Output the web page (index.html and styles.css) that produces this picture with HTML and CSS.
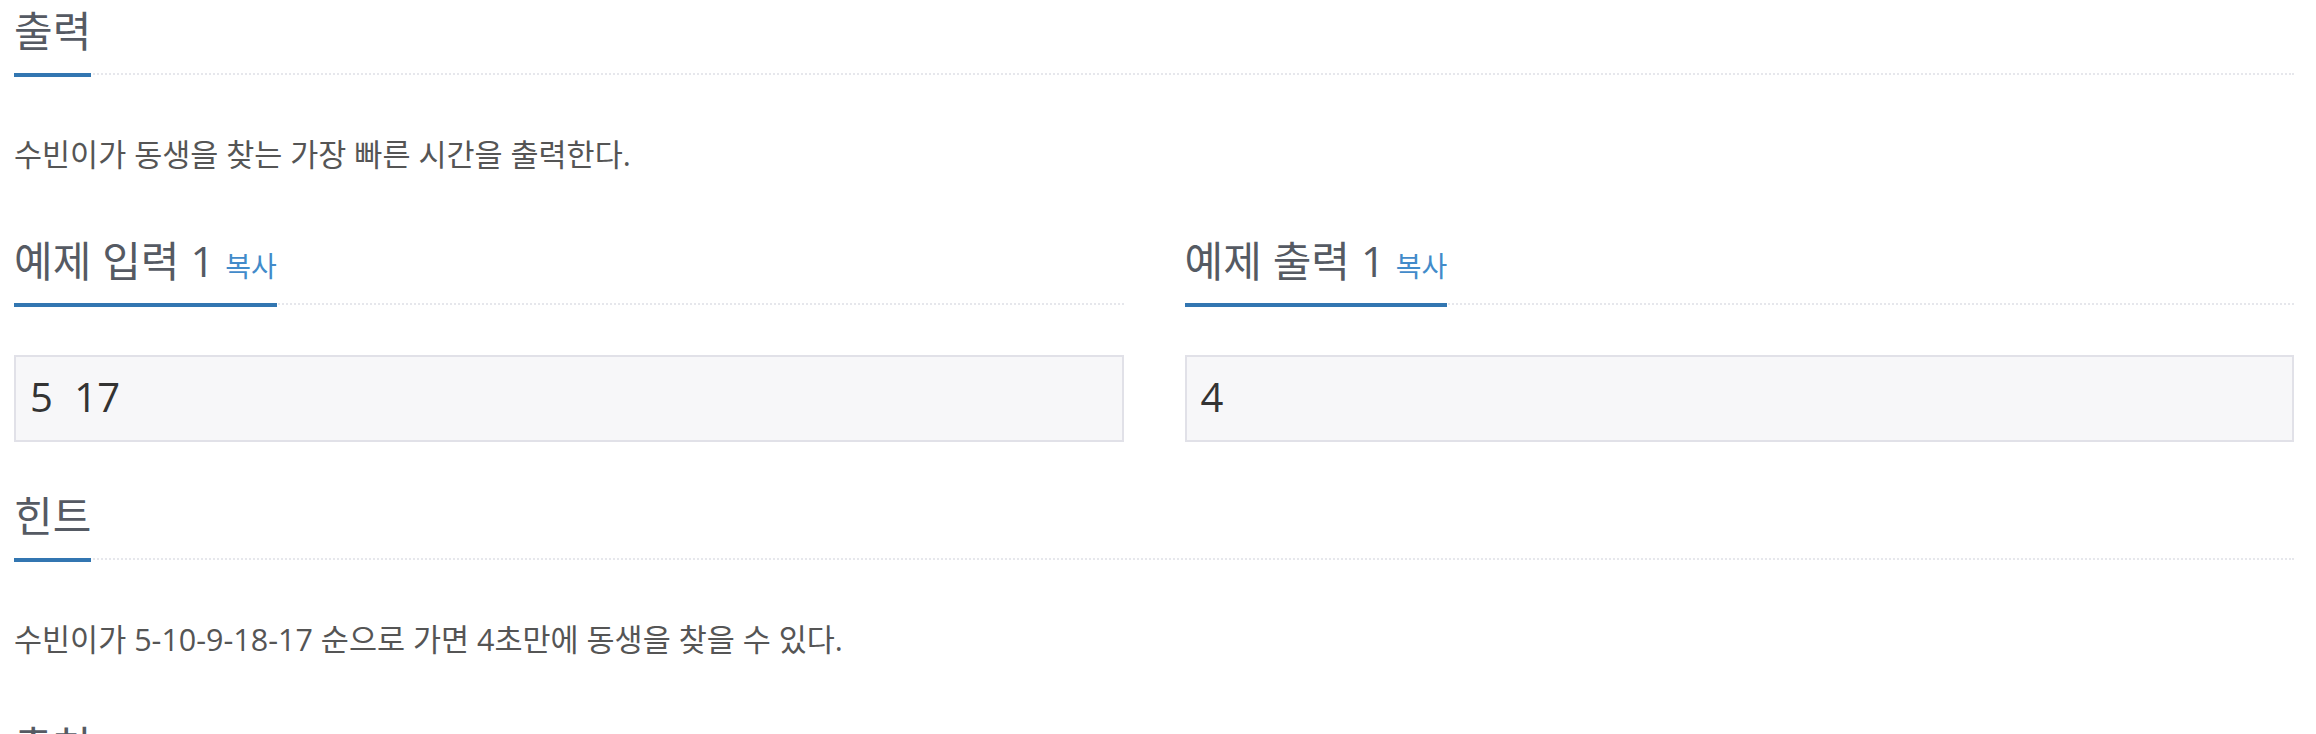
FILE: index.html
```html
<!DOCTYPE html>
<html lang="ko">
<head>
<meta charset="utf-8">
<title>문제</title>
<link rel="stylesheet" href="styles.css">
</head>
<body>
<div class="page">
  <section class="sec">
    <div class="headline"><h2>출력</h2></div>
    <p class="text">수빈이가 동생을 찾는 가장 빠른 시간을 출력한다.</p>
  </section>

  <div class="samples">
    <section class="sample">
      <div class="headline"><h2>예제 입력 1 <a class="copy" href="#">복사</a></h2></div>
      <pre class="sampledata">5 17</pre>
    </section>
    <section class="sample">
      <div class="headline"><h2>예제 출력 1 <a class="copy" href="#">복사</a></h2></div>
      <pre class="sampledata">4</pre>
    </section>
  </div>

  <section class="sec">
    <div class="headline"><h2>힌트</h2></div>
    <p class="text">수빈이가 5-10-9-18-17 순으로 가면 4초만에 동생을 찾을 수 있다.</p>
  </section>

  <section class="sec">
    <div class="headline"><h2>출처</h2></div>
  </section>
</div>
</body>
</html>
```

FILE: styles.css
```css
html, body {
  margin: 0;
  background: #ffffff;
}

body {
  font-family: "Open Sans", "Noto Sans CJK KR", sans-serif;
  font-feature-settings: "palt";
}

.page {
  display: flex;
  flex-direction: column;
  gap: 49px;
  padding: 6px 22px 0 14px;
}

.samples {
  display: grid;
  grid-template-columns: 1fr 1fr;
  column-gap: 61px;
}

.headline {
  display: flex;
  align-items: flex-start;
  border-bottom: 2px dotted #e6e7ec;
  margin-bottom: 50px;
}

.headline h2 {
  margin: 0 0 -4px 0;
  padding-bottom: 17px;
  font-size: 42px;
  line-height: 50px;
  font-weight: 400;
  color: #555a63;
  border-bottom: 4px solid #3276b1;
  white-space: nowrap;
}

.copy {
  font-size: 28px;
  line-height: 28px;
  color: #428bca;
  text-decoration: none;
}

.text {
  margin: 0 0 3px 0;
  font-size: 30.5px;
  line-height: 59px;
  color: #555555;
}

.sampledata {
  margin: 0;
  padding: 0 14px 3px 14px;
  background: #f7f7f9;
  border: 2px solid #e1e1e8;
  font-family: "Open Sans", "Noto Sans CJK KR", sans-serif;
  font-size: 40px;
  line-height: 80px;
  color: #333333;
  word-spacing: 11px;
}
```
